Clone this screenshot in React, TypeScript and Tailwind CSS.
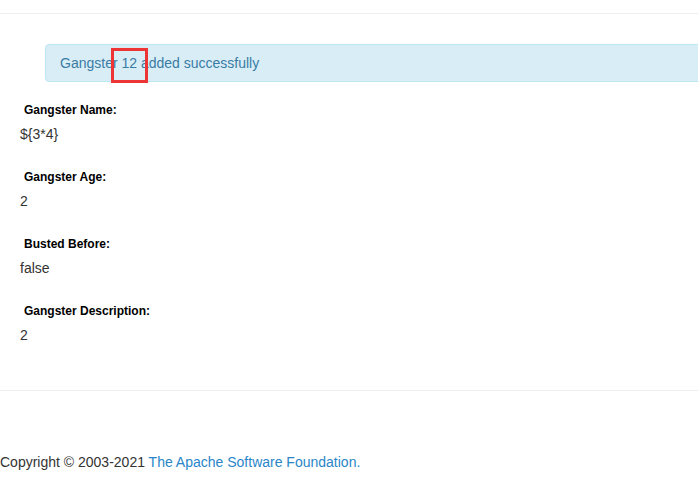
import React from 'react';

const fields = [
  { label: 'Gangster Name:', value: '${3*4}' },
  { label: 'Gangster Age:', value: '2' },
  { label: 'Busted Before:', value: 'false' },
  { label: 'Gangster Description:', value: '2' },
];

export default function App() {
  return (
    <div className="relative w-[698px] h-[504px] overflow-hidden bg-white text-[14px] leading-[20px] text-[#333]" style={{ fontFamily: '"Liberation Sans", Arial, sans-serif' }}>
      {/* top rule */}
      <div className="h-[13px]" />
      <div className="border-t border-[#eee]" />

      {/* success alert */}
      <div className="mt-[30px] ml-[45px] w-[700px] rounded-[4px] border border-[#bce8f1] bg-[#d9edf7] py-[8px] pl-[14px] text-[#3a7ca3]">
        Gangster 12 added successfully
      </div>

      {/* details */}
      <div className="mt-[20px] flex flex-col gap-[25px]">
        {fields.map((f) => (
          <div key={f.label}>
            <div className="pl-[24px] text-[12px] leading-[16px] font-bold text-black">{f.label}</div>
            <div className="mt-[6px] pl-[20px]">{f.value}</div>
          </div>
        ))}
      </div>

      {/* bottom rule */}
      <div className="mt-[45px] border-t border-[#eee]" />

      {/* footer */}
      <div className="mt-[61px]">
        Copyright © 2003-2021 <span className="text-[#2a86c9]">The Apache Software Foundation.</span>
      </div>

      {/* annotation box */}
      <div className="absolute left-[111px] top-[48px] w-[37px] h-[35px] border-[3px] border-[#ee3535]" />
    </div>
  );
}
